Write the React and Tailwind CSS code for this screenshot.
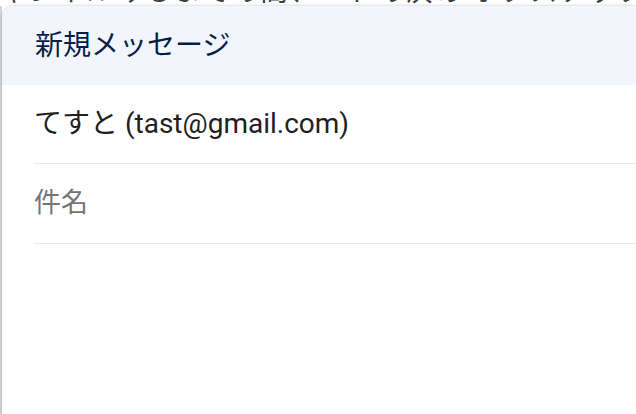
export default function App() {
  return (
    <div
      className="relative w-[636px] h-[414px] overflow-hidden bg-white"
      style={{ fontFamily: 'Roboto, "Noto Sans CJK JP", sans-serif' }}
    >
      {/* page behind the compose window */}
      <div className="flex flex-col text-[#3c4043]">
        <p className="-mt-[24px] whitespace-nowrap text-[27px] leading-[32px] tracking-[2px]">
          ャンネルみるまでの間、ードの決め ボタスチップス
        </p>
      </div>
      <div className="absolute left-0 top-[6px] bottom-0 w-[2px] bg-[#d2d5d9]" />

      {/* compose window */}
      <div className="absolute left-[2px] top-[6px] right-0 bottom-0 flex flex-col rounded-tl-[12px] bg-white shadow-[0_0_3px_rgba(0,0,0,0.25)] overflow-hidden">
        <div className="flex h-[79px] shrink-0 items-center bg-[#f2f6fc] pl-[33px]">
          <span className="text-[28px] text-[#041e49]">新規メッセージ</span>
        </div>
        <div className="flex flex-col pl-[32px]">
          <div className="flex h-[79px] items-center border-b border-[#e8eaed]">
            <span className="text-[28px] text-[#1f1f1f]">てすと (tast@gmail.com)</span>
          </div>
          <div className="flex h-[80px] items-center border-b border-[#e8eaed]">
            <span className="text-[27px] text-[#757575]">件名</span>
          </div>
        </div>
      </div>
    </div>
  );
}
